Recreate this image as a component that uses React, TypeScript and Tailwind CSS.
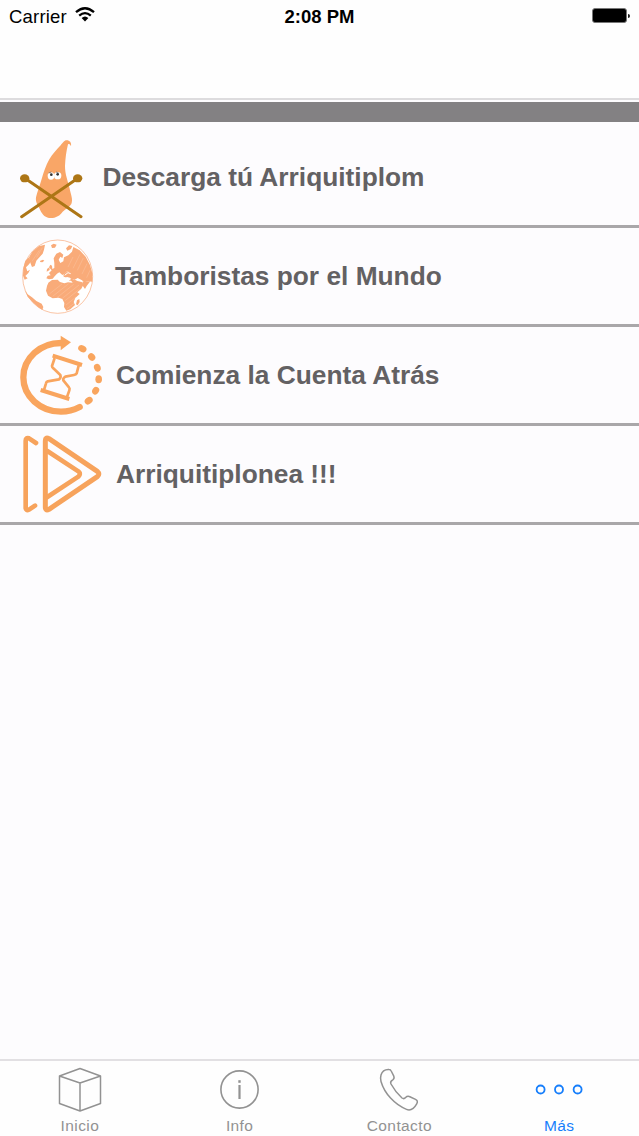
import type { ReactNode } from "react";

type MenuItem = {
  title: string;
  icon: ReactNode;
  titleClass: string;
};

type Tab = {
  label: string;
  icon: ReactNode;
  active?: boolean;
};

function MascotIcon() {
  return (
    <svg className="h-[84px] w-[63px] shrink-0" viewBox="60 30 189 252">
      <path
        fill="#f9a667"
        d="M213 64C215 53 209 46 200 46C192 46 188 54 182 61C170 74 157 88 148 103C138 121 131 141 125 162C119 183 112 200 108 217C106 230 113 242 118 250C124 265 133 277 147 279C165 281 180 272 188 260C197 252 208 247 214 237C220 223 212 207 209 191C203 166 195 148 195 123C196 101 199 78 204 58C209 56 210 59 213 64Z"
      />
      <ellipse cx="153" cy="153" rx="10" ry="11" fill="#fff" />
      <ellipse cx="173" cy="152" rx="11" ry="11" fill="#fff" />
      <circle cx="154" cy="149" r="4" fill="#333" />
      <circle cx="173" cy="148" r="4" fill="#333" />
      <path d="M146 144l8-3M168 141l8 3" stroke="#555" strokeWidth="2" />
      <path
        d="M77 161L243 275M231 161L65 275"
        stroke="#ad7616"
        strokeWidth="9"
        strokeLinecap="round"
      />
      <ellipse cx="74" cy="160" rx="14" ry="12" fill="#ad7616" />
      <ellipse cx="233" cy="160" rx="14" ry="12" fill="#ad7616" />
    </svg>
  );
}

function GlobeIcon() {
  return (
    <svg className="size-20 shrink-0" viewBox="60 18 240 240">
      <ellipse cx="173" cy="140" rx="105" ry="110" fill="#fff" stroke="#f7a878" strokeWidth="2" />
      <g fill="#f9ab79">
        {/* north america and greenland */}
        <path d="M87 82L97 65L116 49L135 44L132 59L128 71L117 83L109 92L104 108L96 111L92 101Z" />
        <path d="M76 92L87 82L93 95L85 105L78 112L82 124L90 119L85 129L76 138L83 145L74 149L69 137L70 114Z" />
        <path d="M121 92l8-3 4 3-6 5-7-1zM153 46l8-5 9 3-5 9-9 1z" />
        {/* south america */}
        <path d="M74 180L82 192L96 202L109 213L125 221L130 231L127 240L115 232L98 217L83 200Z" />
        {/* europe and asia */}
        <path d="M147 112L151 104L156 107L157 117L163 114L163 99L161 85L169 71L180 66L190 74L187 84L181 80L176 89L181 99L190 94L192 82L205 76L216 65L220 51L239 61L257 80L270 105L277 130L277 155L265 154L252 157L246 151L233 144L224 149L216 145L219 136L211 132L214 124L202 123L194 131L187 135L178 127L171 131L164 139L158 146L147 148L139 145L143 137L152 136L147 129L155 121Z" />
        <path d="M198 55l9-9 10 2-4 9-11 5zM141 117l7-5 1 8-9 5z" />
        {/* turkey and the levant */}
        <path d="M190 134L202 124L216 122L222 136L218 150L206 154L214 146L202 141L192 143Z" />
        {/* africa and arabia */}
        <path d="M145 158L156 150L173 149L180 156L193 160L204 157L218 158L211 149L222 148L232 153L245 156L251 163L244 176L232 187L239 192L226 204L221 216L225 225L211 238L199 242L192 231L193 219L187 207L176 203L158 205L144 197L138 182L141 168Z" />
        <path d="M231 211l7-4 1 9-6 10-5-3zM247 155l24-1-11 14-5 9-6-8z" />
      </g>
      <path
        d="M165 144l7-4 6 8 4-9 6 5 7-2 4 7 9-6M194 136l10-8 8 3"
        fill="none"
        stroke="#fff"
        strokeWidth="3"
      />
      {/* pencil-like hatching over the land */}
      <path
        d="M148 192l38-30M158 199l48-38M171 203l50-40M187 205l50-40M194 213l45-36M198 225l30-24M201 236l24-18M204 111l15-30M219 115l21-42M232 121l18-37M246 132l15-31M260 143l10-22M96 94l22-33M110 82l17-29"
        stroke="#fff"
        strokeOpacity=".3"
        strokeWidth="1.5"
      />
    </svg>
  );
}

function CountdownIcon() {
  return (
    <svg className="size-[82px] shrink-0" viewBox="60 27 246 246">
      <path
        d="M184 54A113 103 0 0 0 70 157A113 103 0 0 0 183 260Q212 260 239 246"
        fill="none"
        stroke="#f9a55e"
        strokeWidth="19"
        strokeLinecap="round"
      />
      <path d="M182 32L213 52L182 76Z" fill="#f9a55e" />
      <g fill="#f9a55e">
        <ellipse cx="247" cy="71" rx="13" ry="10" transform="rotate(25 247 71)" />
        <ellipse cx="275" cy="96" rx="12" ry="10" transform="rotate(50 275 96)" />
        <ellipse cx="292" cy="128" rx="12" ry="10" transform="rotate(70 292 128)" />
        <ellipse cx="296" cy="163" rx="10" ry="12" />
        <ellipse cx="287" cy="197" rx="12" ry="10" transform="rotate(-60 287 197)" />
        <ellipse cx="266" cy="227" rx="13" ry="10" transform="rotate(-38 266 227)" />
      </g>
      <g fill="none" stroke="#f9a55e" strokeLinejoin="round">
        <path d="M158 92L246 120M122 195L208 222" strokeWidth="12" />
        <path
          d="M164 99L156 123Q156 127 160 130L181 150Q184 158 177 163L143 169Q139 170 138 175L132 195M236 122L230 145Q228 149 222 150L196 155Q188 160 190 166L207 187Q210 190 208 196L201 216"
          strokeWidth="8"
        />
      </g>
    </svg>
  );
}

function PlayIcon() {
  return (
    <svg
      className="ml-0.5 size-20 shrink-0"
      viewBox="66 27 240 240"
      fill="none"
      stroke="#f7a35c"
      strokeLinecap="round"
      strokeLinejoin="round"
    >
      <path d="M108 54L87 40Q77 37 77 47V248Q77 258 87 254L105 242" strokeWidth="14" />
      <path
        d="M136 47Q136 35 147 41L292 139Q301 147 292 155L147 253Q136 259 136 247Z"
        strokeWidth="15"
      />
      <path d="M142 78L235 139Q244 147 235 155L142 216" strokeWidth="14" />
    </svg>
  );
}

function BoxIcon() {
  return (
    <svg className="h-[46px] w-11" viewBox="0 0 44 46" fill="none" stroke="#929292" strokeWidth="1.5" strokeLinejoin="round">
      <path d="M22 1.5L42.5 9V36.5L22 44L1.5 36.5V9ZM1.5 9L22 16L42.5 9M22 16V44" />
    </svg>
  );
}

function InfoIcon() {
  return (
    <svg className="h-[46px] w-11" viewBox="0 0 44 46" fill="none" stroke="#929292">
      <circle cx="21.5" cy="22.5" r="18.6" strokeWidth="1.6" />
      <path d="M21.5 18V32" strokeWidth="2.2" />
      <path d="M21.5 13.2V15.8" strokeWidth="2.4" />
    </svg>
  );
}

function PhoneIcon() {
  return (
    <svg className="h-[46px] w-11" viewBox="0 0 44 46" fill="none" stroke="#929292" strokeWidth="1.5" strokeLinejoin="round">
      <path d="M4 8C5 4.5 8 2.2 12 2.4C13.2 2.4 13.8 3 14.2 4L16.8 9.2C17.5 11 17 12 15.8 12.8C13.6 14 13 15 14 17C17 22.5 20.5 27 25 31C26.4 32 27.7 31.6 28.6 30.5C30.1 29 31.3 29 32.9 29.7L38.5 32.4C40.6 33.5 40.8 34.8 39.7 36.8C37.2 41.3 33.5 44 29.5 42.4C17.5 37.5 7.5 26.5 4 14.5C3.4 12.3 3.4 10 4 8Z" />
    </svg>
  );
}

function MoreIcon() {
  return (
    <svg className="h-[46px] w-12" viewBox="0 0 48 46" fill="none" stroke="#167efb" strokeWidth="1.8">
      <circle cx="5.6" cy="22.5" r="4" />
      <circle cx="24" cy="22.5" r="4" />
      <circle cx="42.6" cy="22.5" r="4" />
    </svg>
  );
}

const menuItems: MenuItem[] = [
  { title: "Descarga tú Arriquitiplom", icon: <MascotIcon />, titleClass: "pl-[19.5px]" },
  { title: "Tamboristas por el Mundo", icon: <GlobeIcon />, titleClass: "pl-[15px]" },
  { title: "Comienza la Cuenta Atrás", icon: <CountdownIcon />, titleClass: "pl-[14px]" },
  { title: "Arriquitiplonea !!!", icon: <PlayIcon />, titleClass: "pl-[14px]" },
];

const tabs: Tab[] = [
  { label: "Inicio", icon: <BoxIcon /> },
  { label: "Info", icon: <InfoIcon /> },
  { label: "Contacto", icon: <PhoneIcon /> },
  { label: "Más", icon: <MoreIcon />, active: true },
];

function StatusBar() {
  return (
    <div className="grid h-[33px] grid-cols-3 items-center text-[18.5px] leading-[33px] text-black">
      <div className="flex items-center gap-2 pl-[9px]">
        <span className="tracking-[0.2px]">Carrier</span>
        <svg className="-mt-1 h-[15px] w-5" viewBox="0 0 20 15" fill="none" stroke="#000">
          <path d="M1 5.2Q10-2.8 19 5.2" strokeWidth="2.3" />
          <path d="M4.2 8.6Q10 3.6 15.8 8.6" strokeWidth="2.3" />
          <path d="M6.6 11Q10 8 13.4 11L10 14.4Z" fill="#000" stroke="none" />
        </svg>
      </div>
      <span className="text-center font-bold">2:08 PM</span>
      <div className="flex items-center justify-end gap-px pr-[9px] pb-0.5">
        <div className="h-[15px] w-[35px] rounded-[3px] border border-[#777] bg-black" />
        <div className="h-1 w-0.5 rounded-r-full bg-[#222]" />
      </div>
    </div>
  );
}

export default function App() {
  return (
    <div className="flex h-[1136px] w-[639px] flex-col overflow-hidden bg-[#fdfcfe] font-['Liberation_Sans',Arial,sans-serif]">
      <header className="h-[100px] border-b-2 border-[#dddcde] bg-[#fefefe]">
        <StatusBar />
      </header>
      <div className="mt-0.5 h-5 bg-[#838183]" />

      <main className="flex-1">
        <ul className="pt-[7px]">
          {menuItems.map((item) => (
            <li
              key={item.title}
              className="flex h-[99px] items-center border-b-3 border-[#a9a7a9] pl-5"
            >
              {item.icon}
              <span
                className={`pt-px text-[26.3px] leading-none font-bold whitespace-nowrap text-[#636163] ${item.titleClass}`}
              >
                {item.title}
              </span>
            </li>
          ))}
        </ul>
      </main>

      <nav className="grid h-[77px] grid-cols-4 border-t-2 border-[#e2e0e3] bg-[#fefefe]">
        {tabs.map((tab) => (
          <a
            key={tab.label}
            className={`flex flex-col items-center pt-[6px] text-[15.5px] ${
              tab.active ? "text-[#167efb]" : "text-[#929292]"
            }`}
          >
            {tab.icon}
            <span className="mt-1 leading-[18px] tracking-[0.4px]">{tab.label}</span>
          </a>
        ))}
      </nav>
    </div>
  );
}
